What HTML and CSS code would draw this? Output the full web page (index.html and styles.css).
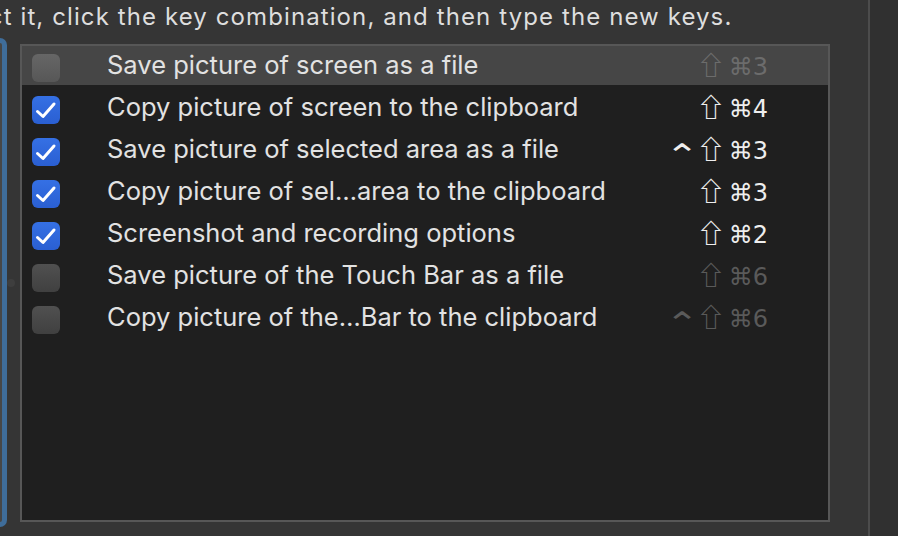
FILE: index.html
```html
<!DOCTYPE html>
<html>
<head>
<meta charset="utf-8">
<link rel="stylesheet" href="styles.css">
</head>
<body>
<div class="main">
  <div class="instructions"><span class="clip">select it, click the key combination, and then type the new keys.</span></div>
  <div class="content">
    <div class="focus-pane"></div>
    <div class="splitter"><span class="knob"></span></div>
    <div class="table">
      <div class="row highlighted">
        <span class="check off"></span>
        <span class="label">Save picture of screen as a file</span>
        <span class="keys dim"><span class="shift">⇧</span>⌘3</span>
      </div>
      <div class="row">
        <span class="check on"><svg viewBox="0 0 28 28"><polyline points="5.5,15.5 11,20.5 22,8"/></svg></span>
        <span class="label">Copy picture of screen to the clipboard</span>
        <span class="keys"><span class="shift">⇧</span>⌘4</span>
      </div>
      <div class="row">
        <span class="check on"><svg viewBox="0 0 28 28"><polyline points="5.5,15.5 11,20.5 22,8"/></svg></span>
        <span class="label">Save picture of selected area as a file</span>
        <span class="keys"><span class="ctrl">⌃</span><span class="shift">⇧</span>⌘3</span>
      </div>
      <div class="row">
        <span class="check on"><svg viewBox="0 0 28 28"><polyline points="5.5,15.5 11,20.5 22,8"/></svg></span>
        <span class="label">Copy picture of sel…area to the clipboard</span>
        <span class="keys"><span class="shift">⇧</span>⌘3</span>
      </div>
      <div class="row">
        <span class="check on"><svg viewBox="0 0 28 28"><polyline points="5.5,15.5 11,20.5 22,8"/></svg></span>
        <span class="label">Screenshot and recording options</span>
        <span class="keys"><span class="shift">⇧</span>⌘2</span>
      </div>
      <div class="row">
        <span class="check off"></span>
        <span class="label">Save picture of the Touch Bar as a file</span>
        <span class="keys dim2"><span class="shift">⇧</span>⌘6</span>
      </div>
      <div class="row">
        <span class="check off"></span>
        <span class="label">Copy picture of the…Bar to the clipboard</span>
        <span class="keys dim2"><span class="ctrl">⌃</span><span class="shift">⇧</span>⌘6</span>
      </div>
    </div>
  </div>
</div>
<div class="divider"></div>
<div class="side"></div>
</body>
</html>
```
FILE: styles.css
```css
html, body {
  margin: 0;
  height: 536px;
  overflow: hidden;
}
body {
  background: #353535;
  display: flex;
  font-family: "Inter", "Liberation Sans", sans-serif;
  color: #e2e2e2;
}
.main {
  width: 868px;
  display: flex;
  flex-direction: column;
}
.instructions {
  height: 38px;
  overflow: hidden;
  white-space: nowrap;
  font-size: 24px;
  letter-spacing: 1.1px;
  line-height: 34px;
  color: #dedede;
}
.clip {
  display: inline-block;
  margin-left: -62px;
}
.content {
  display: flex;
}
.focus-pane {
  width: 2px;
  height: 479px;
  background: #474747;
  border: 5px solid #3f6d9a;
  border-left: 0;
  border-radius: 0 7px 7px 0;
}
.splitter {
  width: 13px;
  display: flex;
  align-items: center;
}
.knob {
  width: 8px;
  height: 8px;
  border-radius: 50%;
  background: #3e3e3e;
}
.table {
  margin-top: 6px;
  width: 806px;
  height: 474px;
  border: 2px solid #575757;
  background: #1f1f1f;
}
.row {
  height: 42px;
  display: flex;
  align-items: center;
  padding: 0 60px 0 10px;
}
.row.highlighted {
  background: linear-gradient(#464646 0 39px, transparent 39px);
}
.check {
  width: 28px;
  height: 28px;
  border-radius: 6px;
  margin-top: 2px;
  flex: none;
  display: flex;
}
.check svg {
  width: 28px;
  height: 28px;
}
.check polyline {
  fill: none;
  stroke: #fff;
  stroke-width: 3;
  stroke-linecap: round;
  stroke-linejoin: round;
}
.check.on {
  background: linear-gradient(#3570e4, #2a5fd2);
}
.check.off {
  background: linear-gradient(#505050, #404040);
}
.highlighted .check.off {
  background: linear-gradient(#666, #575757);
}
.label {
  margin-left: 47px;
  margin-bottom: 6px;
  font-size: 25.5px;
  flex: 1;
  white-space: nowrap;
}
.keys {
  font-family: "DejaVu Sans", sans-serif;
  font-size: 24px;
  color: #eeeeee;
  margin-bottom: 6px;
  display: flex;
  align-items: baseline;
}
.shift {
  display: inline-block;
  font-family: "Noto Sans CJK JP", "DejaVu Sans", sans-serif;
  transform: translateY(-1px) scale(1.25, 1.1);
  margin: 0 6px 0 3px;
}
.ctrl {
  display: inline-block;
  transform: translateY(4px) scale(1.7, 1.3);
  transform-origin: 50% 40%;
  margin: 0 4px 0 0;
}
.keys.dim {
  color: #6c6c6c;
}
.keys.dim2 {
  color: #5a5a5a;
}
.divider {
  width: 2px;
  background: #4c4c4c;
}
.side {
  flex: 1;
  background: #303030;
}
```
